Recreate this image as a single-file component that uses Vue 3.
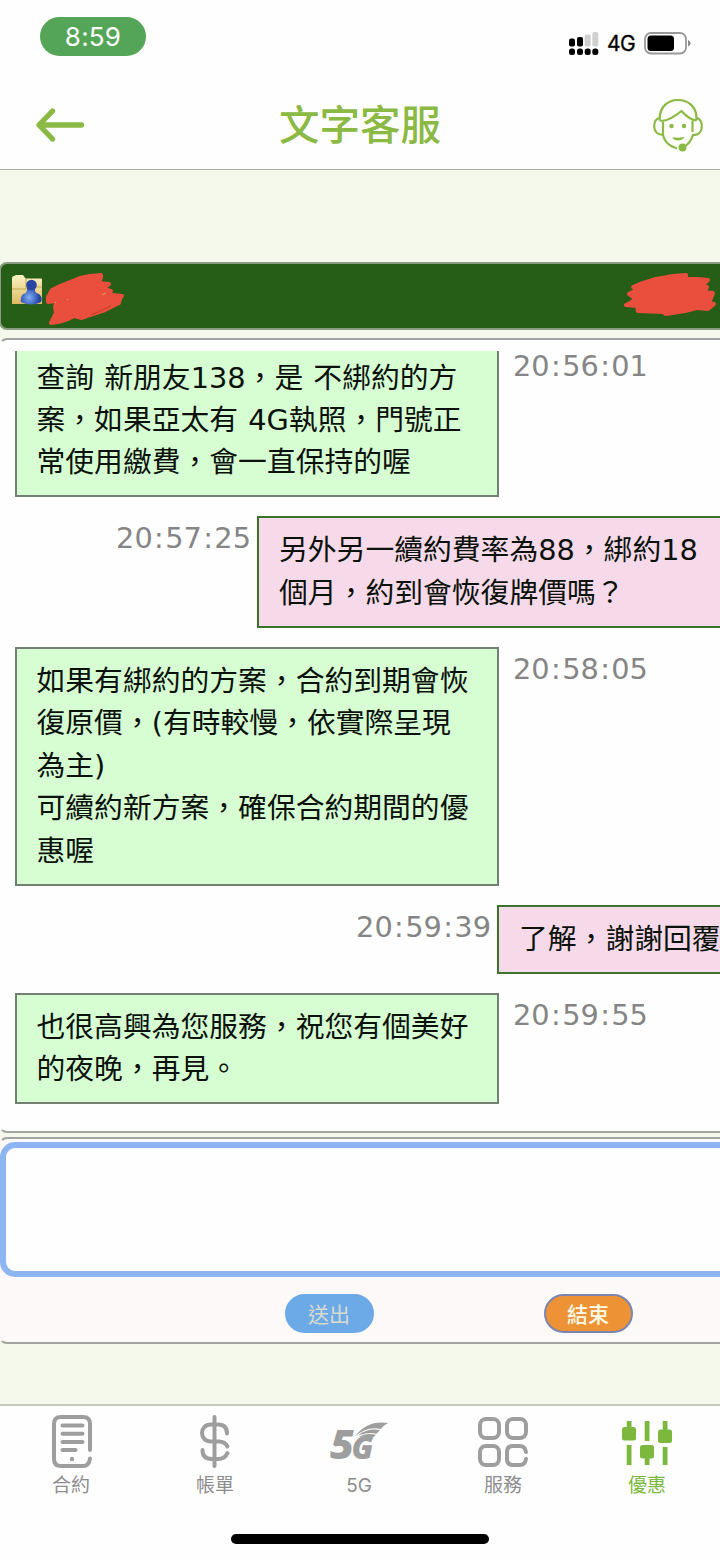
<script setup>
const messages = [
  { from: 'staff', time: '20:56:01', lines: ['查詢 新朋友138，是 不綁約的方', '案，如果亞太有 4G執照，門號正', '常使用繳費，會一直保持的喔'] },
  { from: 'user', wide: true, time: '20:57:25', lines: ['另外另一續約費率為88，綁約18', '個月，約到會恢復牌價嗎？'] },
  { from: 'staff', time: '20:58:05', lines: ['如果有綁約的方案，合約到期會恢', '復原價，(有時較慢，依實際呈現', '為主)', '可續約新方案，確保合約期間的優', '惠喔'] },
  { from: 'user', time: '20:59:39', lines: ['了解，謝謝回覆'] },
  { from: 'staff', time: '20:59:55', lines: ['也很高興為您服務，祝您有個美好', '的夜晚，再見。'] },
]
const tabs = [
  { id: 'contract', label: '合約' },
  { id: 'bill', label: '帳單' },
  { id: 'fiveg', label: '5G' },
  { id: 'service', label: '服務' },
  { id: 'offers', label: '優惠', active: true },
]
const parts = (time) => time.split(/(:)/)
</script>

<template>
  <div class="screen">
    <div class="status">
      <span class="clock">8:59</span>
      <div class="indicators">
        <svg class="signal" width="30" height="24" viewBox="0 0 30 24">
          <g fill="#000">
            <rect x="0" y="6.500" width="6" height="8" rx="2" />
            <rect x="8" y="5" width="6" height="9.500" rx="2" />
            <rect x="0" y="16.500" width="6" height="6.500" rx="2.500" />
            <rect x="8" y="16.500" width="6" height="6.500" rx="2.500" />
            <rect x="15.700" y="16.500" width="6" height="6.500" rx="2.500" />
            <rect x="23.300" y="16.500" width="6" height="6.500" rx="2.500" />
          </g>
          <g fill="#d0d0d0">
            <rect x="15.700" y="2.500" width="6" height="12" rx="2" />
            <rect x="23.300" y="0" width="6" height="14.500" rx="2" />
          </g>
        </svg>
        <span class="net">4G</span>
        <svg width="48" height="24" viewBox="0 0 48 24">
          <rect x="1" y="1" width="41" height="20.500" rx="6" fill="#fff" stroke="#999" stroke-width="1.800" />
          <rect x="3.500" y="3.500" width="26.500" height="15.500" rx="3.500" />
          <path d="M44 8q2.500 .8 2.500 3.200T44 14.500z" fill="#888" />
        </svg>
      </div>
    </div>

    <header class="header">
      <svg class="back" width="50" height="36" viewBox="0 0 50 36" fill="none" stroke="#8ab944" stroke-width="5.400" stroke-linecap="round" stroke-linejoin="round">
        <path d="M17.500 4 4 18l13.500 14M4.500 18H46.500" />
      </svg>
      <h1>文字客服</h1>
      <svg class="headset" width="50" height="54" viewBox="0 0 50 54" fill="none" stroke="#8ab944" stroke-width="2.200">
        <path d="M6.700 22.500V20C7 9 14.500 2 25 2s18.500 7 18.500 18v2.500" />
        <path d="M6.700 22.500C13 24 20.500 19.500 28.500 13c4 4.500 8.500 8.500 15 9.500" />
        <path d="M10 23.500v13.500c1.500 7 7 11.500 14 13.500M39.500 22.500V34" />
        <path d="M6 20C2.500 21 1.200 24 1.200 28.500s3 8 8.500 8.500M44 20c3.500 1 4.800 4 4.800 8.500S46 37 40 37c-1.500 5-4.500 9-8.500 11.500" />
        <path d="M20 40c3 2.500 7.500 2.500 10 0q-5 1-10 0z" stroke-width="1.300" />
        <g fill="#8ab944" stroke="none"><circle cx="18.500" cy="28" r="2.200" /><circle cx="31" cy="28" r="2.200" /><circle cx="29.500" cy="49.500" r="3.900" /></g>
      </svg>
    </header>

    <main class="chat">
      <div class="banner">
        <svg class="contact" width="130" height="64" viewBox="0 0 130 64">
          <defs>
            <linearGradient id="folder" x1="0" y1="0" x2="0" y2="1"><stop offset="0" stop-color="#fbf3c5" /><stop offset="1" stop-color="#dcba62" /></linearGradient>
            <radialGradient id="person" cx=".4" cy=".7"><stop offset="0" stop-color="#7fb0f5" /><stop offset="1" stop-color="#2444a8" /></radialGradient>
          </defs>
          <path d="M12 14q0-2 2-2l2-1h7l2.500 3.500H41q1 0 1 1V40H12z" fill="url(#folder)" />
          <path d="M12 25h14M26 15v10M36 23h6" stroke="#c9a94f" stroke-width="1.200" />
          <path d="M27 26q-1-8 4-9 6 1 4 9 0 3 4 4 4 3 2 8-10 5-20 0-1-5 2-8 4-1 4-4z" fill="url(#person)" />
          <circle cx="31.500" cy="21" r="5.300" fill="#2945a6" />
          <path d="M101 11 90 12 80 14 70 18 60 22 52 26 48 33 48 38 57 37 55 43 56 49 51 59 58 58 68 55 74 52 82 54 90 51 105 46 119 39 120 35 122 32 112 31 108 31 111 27 103 25 109 20 99 19 101 13z" fill="#e94f3c" stroke="#e94f3c" stroke-width="4" stroke-linejoin="round" />
          <path d="m91 51 20-9" stroke="#c53b2b" stroke-width="1" />
          <path d="m102 31 4-2M55 39l1-1M67 36l1-1" stroke="#e8a05a" stroke-width="1" />
        </svg>
        <svg class="scribble" width="100" height="54" viewBox="0 0 100 54">
          <path d="M66 7 53 8 36 11 20 16 13 19 18 21 9 26 15 30 12 34 6 37 17 38 18 43 43 44 46 46 65 43 77 40 88 41 94 36 89 35 91 30 93 25 85 24 87 19 82 18 88 12 78 11 66 11z" fill="#e94f3c" stroke="#e94f3c" stroke-width="4" stroke-linejoin="round" />
        </svg>
      </div>

      <section class="log">
        <div class="scroller">
          <div v-for="m in messages" :key="m.time" class="row" :class="[m.from, { wide: m.wide }]">
            <div class="bubble">
              <p v-for="line in m.lines" :key="line">{{ line }}</p>
            </div>
            <time><span v-for="(p, i) in parts(m.time)" :key="i" :class="{ colon: p === ':' }">{{ p }}</span></time>
          </div>
        </div>
      </section>

      <section class="composer">
        <div class="input"></div>
        <div class="actions">
          <button class="send">送出</button>
          <button class="end">結束</button>
        </div>
      </section>
    </main>

    <nav class="tabs">
      <div v-for="t in tabs" :key="t.id" class="tab" :class="{ active: t.active }">
        <svg v-if="t.id === 'contract'" width="60" height="56" viewBox="0 0 60 56" fill="none" stroke="#9e9e9e" stroke-width="4" stroke-linecap="round">
          <path d="M49 36V10q0-7-7-7H20q-7 0-7 7v35q0 7 7 7h22q6 0 7-7.500" />
          <path d="M21.500 11.500h20M21.500 19.700h20M21.500 28h20M21.500 36h13" />
          <circle cx="31" cy="45" r="2.200" fill="#9e9e9e" stroke="none" />
        </svg>
        <svg v-else-if="t.id === 'bill'" width="60" height="56" viewBox="0 0 60 56" fill="none" stroke="#9e9e9e" stroke-width="4" stroke-linecap="round">
          <path d="M29.500 3v49M42 19.500q0-9-9-9h-7c-12 0-12 17 0 17h8q6 0 8.500 5M17.500 36q0 9 9 9H33q7 0 9.500-6" />
        </svg>
        <svg v-else-if="t.id === 'fiveg'" width="60" height="56" viewBox="0 0 60 56" fill="#9e9e9e">
          <text class="mark" x="1" y="45" font-size="40" textLength="24" lengthAdjust="spacingAndGlyphs">5</text>
          <text class="mark" x="22.500" y="45" font-size="31" textLength="22" lengthAdjust="spacingAndGlyphs">G</text>
          <path d="M26 22.500Q38 6 59 9q-4 2-7 6-14-3-26 7.500z" />
          <path d="M29 21.500Q38 14 51 16l-3.500 3.800Q39 17.500 29 21.500z" />
          <path d="M29 23.200q8-5 18-2.400l-3.500 3Q38 21.500 29 23.200z" />
        </svg>
        <svg v-else-if="t.id === 'service'" width="60" height="56" viewBox="0 0 60 56" fill="none" stroke="#9e9e9e" stroke-width="4">
          <rect x="7" y="5" width="19" height="19" rx="6" />
          <rect x="34" y="5" width="19" height="19" rx="6" />
          <rect x="7" y="32" width="19" height="19" rx="6" />
          <path d="M53 38q-1-6-6-6h-7q-6 0-6 6v7q0 6 6 6h7q5 0 6-6" stroke-linecap="round" />
        </svg>
        <svg v-else width="60" height="56" viewBox="0 0 60 56" fill="#7cb83e">
          <rect x="9.700" y="7" width="4.800" height="10" /><rect x="5" y="13" width="14" height="13.500" rx="2.500" /><rect x="9.700" y="31" width="4.800" height="20" />
          <rect x="27.700" y="7" width="4.800" height="20" /><rect x="23" y="31" width="14" height="13.500" rx="2.500" /><rect x="27.700" y="41" width="4.800" height="10" />
          <rect x="45.700" y="7" width="4.800" height="10" /><rect x="41" y="15.500" width="14" height="13.500" rx="2.500" /><rect x="45.700" y="33" width="4.800" height="18" />
        </svg>
        <span>{{ t.label }}</span>
      </div>
    </nav>
    <div class="home"></div>
  </div>
</template>

<style>
body { background: #fefefe; }
</style>

<style scoped>
* { box-sizing: border-box; }
svg { display: block; flex: none; }
.screen {
  width: 720px;
  height: 1559px;
  overflow: hidden;
  display: flex;
  flex-direction: column;
  background: #fefefe;
  font-family: "DejaVu Sans", "Noto Sans CJK TC", sans-serif;
}
.status {
  height: 80px;
  padding: 17px 28px 0 40px;
  display: flex;
  justify-content: space-between;
  align-items: flex-start;
}
.clock {
  width: 106px;
  height: 39px;
  border-radius: 20px;
  background: #54a557;
  color: #fff;
  font: 26px/40px Inter, sans-serif;
  letter-spacing: 0.2px;
  text-align: center;
}
.indicators { display: flex; padding-top: 15px; }
.net { width: 46px; margin-left: 8px; font: 21px/24px Inter, sans-serif; letter-spacing: -0.5px; margin-right: -9px; -webkit-text-stroke: 0.3px #000; }
.header {
  height: 90px;
  flex: none;
  padding: 0 17px 0 35px;
  display: grid;
  grid-template-columns: 50px 1fr 50px;
  align-items: start;
  border-bottom: 1.500px solid #a9b09e;
}
.back { margin-top: 27px; }
.headset { margin-top: 18px; }
h1 {
  margin: 13px 0 0;
  padding-right: 18px;
  text-align: center;
  font: 500 40.500px/60px "Noto Sans CJK TC", sans-serif;
  color: #8ab944;
}
.chat { height: 1234px; flex: none; padding-top: 92px; background: #f5f9eb; }
.banner, .log, .composer { width: 740px; border: 2px solid #a2a4a0; border-radius: 8px; margin-left: -1px; }
.banner {
  height: 68px;
  border-color: #8b9c82;
  background: #265e17;
  display: flex;
  gap: 490px;
}
.contact { margin-left: -1px; }
.scribble { margin-top: 4px; }
.log { height: 795px; margin-top: 8px; padding-top: 9px; background: #fefefe; border-left-color: transparent; background-clip: border-box; }
.scroller { height: 772px; overflow: hidden; padding-left: 14px; display: flex; flex-direction: column; gap: 19.300px; }
.row { display: flex; flex: none; align-items: flex-start; }
.bubble {
  flex: none;
  width: 484px;
  padding: 11px 19px 11.500px 19.500px;
  border: 2px solid #747f73;
  background: #d7fdd3;
  color: #0b120b;
}
p {
  margin: 0;
  font-size: 28.800px;
  line-height: 42.400px;
  height: 42.400px;
  white-space: nowrap;
  word-spacing: 1px;
}
time {
  flex: none;
  margin-left: 14px;
  color: #858585;
  font-size: 28.800px;
  line-height: 44.500px;
  white-space: nowrap;
}
.row:first-child { margin-top: 2px; }
.row:first-child .bubble { border-top: 0; padding-top: 5.500px; }
.row:first-child time { line-height: 31px; }
.colon { padding: 0 1.400px; }
.user { flex-direction: row-reverse; justify-content: flex-end; }
.user .bubble { width: 300px; background: #f7daea; border-color: #3d742d; padding-left: 20px; }
.user time { width: 482px; text-align: right; padding-right: 6px; margin: 0; }
.user.wide .bubble { width: 500px; }
.user.wide time { width: 242px; }
.composer { height: 207px; margin-top: 4px; padding-top: 3px; background: #fdf9f8; border-left-color: transparent; }
.input { height: 135px; margin-left: -1px; border: 6px solid #8cb5f1; border-radius: 15px; background: #fefefe; }
.actions { display: flex; gap: 170px; padding: 17px 0 0 284px; }
button {
  width: 89px;
  height: 39px;
  padding: 0 1px 0 0;
  border-radius: 20px;
  border: 2px solid #6ca9e7;
  background: #6ca9e7;
  color: #d8dccf;
  font: 21px/31px "Noto Sans CJK TC", sans-serif;
}
.end { background: #ee9335; border-color: #7b85b0; color: #fffbe9; font-weight: 500; }
.tabs {
  height: 110px;
  flex: none;
  display: grid;
  grid-template-columns: repeat(5, 144px);
  border-top: 2px solid #c6c9bf;
}
.tab {
  display: flex;
  flex-direction: column;
  align-items: center;
  padding: 8px 2px 0 0;
  color: #8d8d8d;
  font: 19px/26px Inter, "Noto Sans CJK TC", sans-serif;
}
.tab span { margin-top: 3px; }
.active { color: #7cb83e; }
.mark { font-family: "Open Sans", sans-serif; font-weight: 800; font-style: italic; }
.home { width: 258px; height: 10px; flex: none; margin: 20px 0 0 231px; border-radius: 5px; background: #000; }
</style>
